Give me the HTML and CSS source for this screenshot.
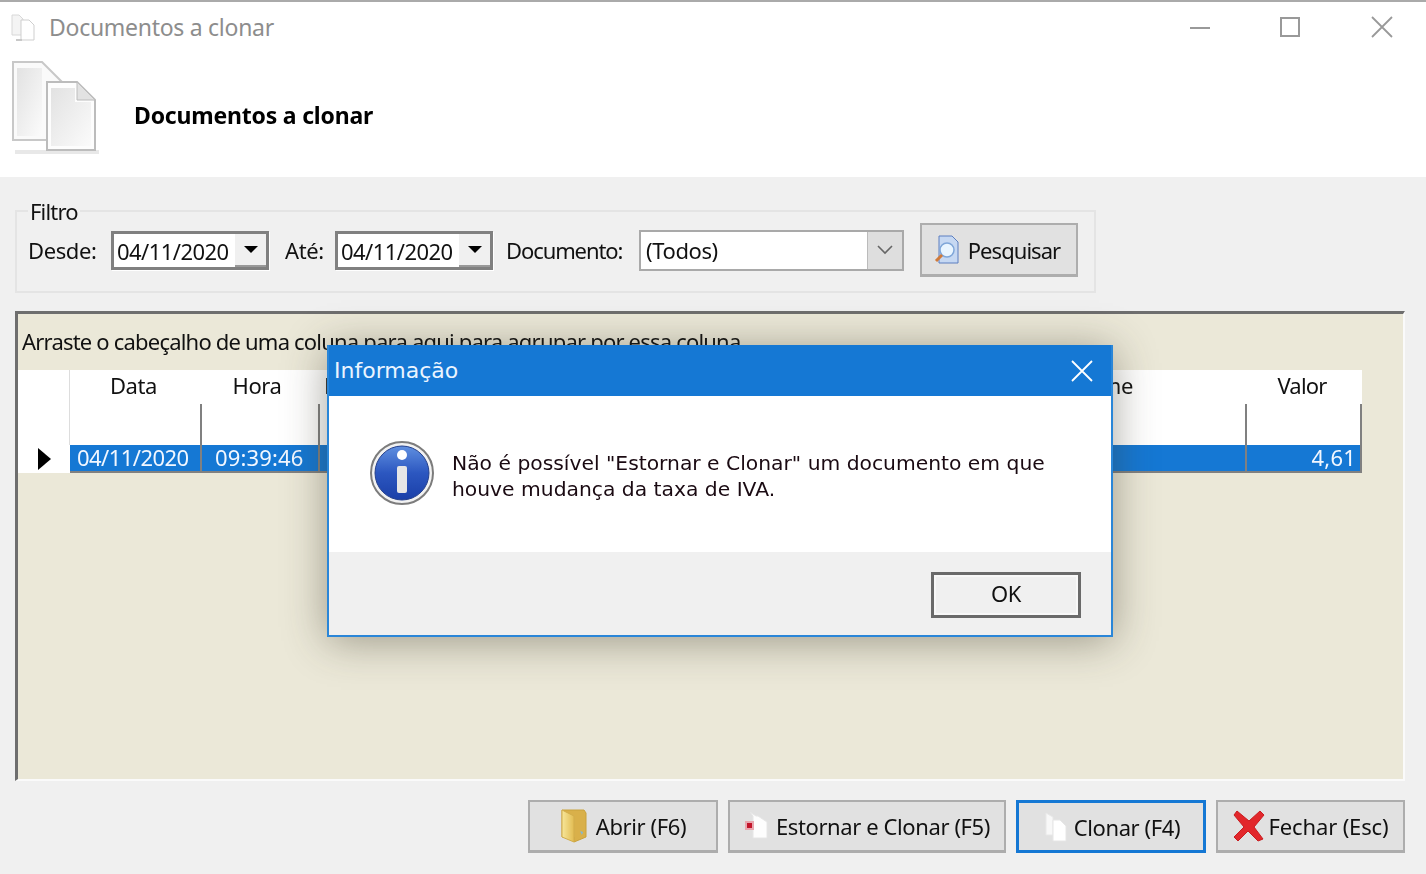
FILE: index.html
```html
<!DOCTYPE html>
<html lang="pt">
<head>
<meta charset="utf-8">
<title>Documentos a clonar</title>
<link rel="stylesheet" href="styles.css">
</head>
<body>
<div class="window">
  <header class="head">
    <div class="titlebar">
      <svg class="title-icon" width="26" height="28" viewBox="0 0 26 28"><path d="M2 2h7l4 4v16H2z" fill="#f4f4f4" stroke="#d8d8d8"/><path d="M11 7h8l5 5v15H11z" fill="#fff" stroke="#cfcfcf"/><path d="M6 27h6" stroke="#c8c8c8" stroke-width="2"/></svg>
      <span class="title-text">Documentos a clonar</span>
      <div class="win-controls">
        <svg width="22" height="22" viewBox="0 0 22 22"><path d="M1 12h20" stroke="#999" stroke-width="2"/></svg>
        <svg width="22" height="22" viewBox="0 0 22 22"><rect x="2" y="2" width="18" height="18" fill="none" stroke="#999" stroke-width="2"/></svg>
        <svg class="win-close" width="22" height="22" viewBox="0 0 22 22"><path d="M1 1l20 20M21 1L1 21" stroke="#999" stroke-width="1.8"/></svg>
      </div>
    </div>
    <div class="banner">
      <svg class="banner-icon" width="90" height="96" viewBox="0 0 90 96">
        <defs>
          <linearGradient id="pg" x1="0" y1="0" x2="1" y2="1"><stop offset="0" stop-color="#e2e2e2"/><stop offset="1" stop-color="#fbfbfb"/></linearGradient>
        </defs>
        <path d="M4 92h84" stroke="#e8e8e8" stroke-width="4"/>
        <path d="M2 2h29l20 20v58H2z" fill="#fafafa" stroke="#c8c8c8" stroke-width="2"/>
        <path d="M6 8h25v68H6z" fill="url(#pg)"/>
        <path d="M36 22h30l18 18v50H36z" fill="#fdfdfd" stroke="#bcbcbc" stroke-width="2"/>
        <path d="M66 22v18h18z" fill="#e2e2e2" stroke="#bcbcbc"/>
        <path d="M40 28h24v14h16v44H40z" fill="url(#pg)"/>
      </svg>
      <strong class="banner-text">Documentos a clonar</strong>
    </div>
  </header>

  <main class="content">
    <fieldset class="filter">
      <legend class="filter-legend">Filtro</legend>
      <div class="filter-row">
        <span class="lbl lbl-desde">Desde:</span>
        <div class="date"><span class="date-val">04/11/2020</span><span class="date-btn"><i class="tri"></i></span></div>
        <span class="lbl lbl-ate">Até:</span>
        <div class="date"><span class="date-val">04/11/2020</span><span class="date-btn"><i class="tri"></i></span></div>
        <span class="lbl lbl-doc">Documento:</span>
        <div class="combo"><span class="combo-val">(Todos)</span><span class="combo-btn"><svg width="16" height="10" viewBox="0 0 16 10"><path d="M1 1l7 7 7-7" fill="none" stroke="#666" stroke-width="1.6"/></svg></span></div>
        <button class="btn btn-search">
          <svg width="26" height="30" viewBox="0 0 26 30"><path d="M5 1h13l6 6v21H5z" fill="#c6d8f2" stroke="#5c7fc0"/><circle cx="13" cy="15" r="7" fill="#e9f5ff" stroke="#7fa6d8" stroke-width="1.5"/><path d="M8 20l-6 6" stroke="#d07a3a" stroke-width="3"/></svg>
          <span>Pesquisar</span>
        </button>
      </div>
    </fieldset>

    <section class="panel">
      <div class="group-hint">Arraste o cabeçalho de uma coluna para aqui para agrupar por essa coluna</div>
      <div class="table">
        <div class="th th-ind"></div>
        <div class="th">Data</div>
        <div class="th th-hora">Hora</div>
        <div class="th th-left">Documento</div>
        <div class="th th-name">Nome</div>
        <div class="th th-valor">Valor</div>

        <div class="sp sp-ind"></div>
        <div class="sp"></div>
        <div class="sp"></div>
        <div class="sp sp-none"></div>
        <div class="sp"></div>
        <div class="sp"></div>

        <div class="td-ind"><i class="arrow"></i></div>
        <div class="td">04/11/2020</div>
        <div class="td td-time">09:39:46</div>
        <div class="td td-none"></div>
        <div class="td"></div>
        <div class="td td-num">4,61</div>
      </div>
    </section>

    <footer class="actions">
      <button class="btn btn-a">
        <svg width="28" height="34" viewBox="0 0 28 34"><defs><linearGradient id="fd" x1="0" y1="0" x2="1" y2="0"><stop offset="0" stop-color="#f7e69a"/><stop offset="1" stop-color="#e2bc52"/></linearGradient></defs><path d="M2 1h22l2 3v24l-12 5V28H2z" fill="#d9b04a" stroke="#c9a23c"/><path d="M2 1l12 6v26L2 28z" fill="url(#fd)" stroke="#d2ad4c"/><path d="M20 22l3 1-1 3z" fill="#7fb8d8"/></svg>
        <span>Abrir (F6)</span>
      </button>
      <button class="btn btn-b">
        <svg width="26" height="32" viewBox="0 0 26 32"><path d="M6 2l6 4h2l9 6v16H9V6z" fill="#fdfdfd" stroke="#e6e6e6"/><rect x="1" y="11" width="9" height="9" fill="#e8a6ae"/><rect x="3" y="13" width="5" height="5" fill="#c2142a"/></svg>
        <span>Estornar e Clonar (F5)</span>
      </button>
      <button class="btn btn-c">
        <svg width="26" height="32" viewBox="0 0 26 32"><path d="M4 2l7 4v18H4z" fill="#f8f8f8" stroke="#e8e8e8"/><path d="M11 9h7l6 6v15H11z" fill="#fff" stroke="#e6e6e6"/></svg>
        <span>Clonar (F4)</span>
      </button>
      <button class="btn btn-d">
        <svg width="32" height="32" viewBox="0 0 32 32"><path d="M4 1l12 10L27 1l4 4-10 12 9 12-5 2-10-10L5 31l-4-4 10-10L1 5z" fill="#e2272b" stroke="#c91c20"/></svg>
        <span>Fechar (Esc)</span>
      </button>
    </footer>
  </main>
</div>

<div class="dialog" role="dialog">
  <div class="dlg-title">
    <span>Informação</span>
    <svg width="22" height="22" viewBox="0 0 22 22"><path d="M1 1l20 20M21 1L1 21" stroke="#fff" stroke-width="1.8"/></svg>
  </div>
  <div class="dlg-body">
    <svg class="dlg-icon" width="66" height="66" viewBox="0 0 66 66">
      <defs>
        <linearGradient id="ib" x1="0" y1="0" x2="0" y2="1"><stop offset="0" stop-color="#5f8fe0"/><stop offset=".5" stop-color="#2c57c0"/><stop offset="1" stop-color="#1a3fa8"/></linearGradient>
      </defs>
      <circle cx="33" cy="33" r="31" fill="#f2f2f2" stroke="#7c7c7c" stroke-width="2"/>
      <circle cx="33" cy="33" r="27" fill="url(#ib)" stroke="#24408c"/>
      <circle cx="33" cy="15" r="5" fill="#fff"/>
      <rect x="28" y="26" width="10" height="27" rx="2" fill="#e6e6e6"/>
    </svg>
    <p class="dlg-msg">Não é possível "Estornar e Clonar" um documento em que<br>houve mudança da taxa de IVA.</p>
  </div>
  <div class="dlg-foot"><button class="ok">OK</button></div>
</div>
</body>
</html>
```
FILE: styles.css
```css
* { box-sizing: border-box; }
html, body { margin: 0; height: 874px; overflow: hidden; }
body {
  background: #f0f0f0;
  font-family: "Noto Sans", "Open Sans", sans-serif;
  font-size: 22px;
  color: #111;
  position: relative;
}
.window { display: flex; flex-direction: column; height: 874px; filter: blur(0.45px); }

.head { background: #fff; border-top: 2px solid #aaa; height: 177px; }
.titlebar { display: flex; align-items: center; height: 52px; padding: 0 33px 2px 10px; }
.title-icon { margin-right: 13px; }
.title-text { font-size: 23px; color: #8d8d8d; letter-spacing: -0.28px; }
.win-controls { margin-left: auto; display: flex; gap: 68px; }
.win-close { margin-left: 2px; }
.banner { display: flex; align-items: flex-start; height: 100px; padding-left: 11px; }
.banner-icon { margin-top: 6px; }
.banner-text { margin: 45px 0 0 33px; font-size: 23px; color: #000; letter-spacing: -0.2px; line-height: 32px; }

.content { flex: 1; display: flex; flex-direction: column; padding: 0 21px 0 15px; }

.filter { margin: 22px 0 0; padding: 0 0 0 11px; width: 1081px; height: 94px; border: 2px solid #e4e4e4; }
.filter-legend { margin-left: 0; padding: 0 2px; font-size: 22px; line-height: 24px; letter-spacing: -0.8px; }
.filter-row { display: flex; align-items: center; height: 56px; margin-top: -1px; }
.lbl { letter-spacing: -0.4px; white-space: nowrap; }
.lbl-desde { width: 83px; }
.lbl-ate { width: 50px; margin-left: 16px; }
.lbl-doc { width: 133px; margin-left: 13px; letter-spacing: -1.1px; }

.date {
  width: 158px; height: 39px; display: flex; align-items: stretch; background: #fff;
  border: 3px solid #808080; box-shadow: 1px 1px 0 #fff;
}
.date-val { flex: 1; padding-left: 3px; line-height: 34px; letter-spacing: -0.55px; }
.date-btn { width: 31px; background: #f0f0f0; display: flex; align-items: center; justify-content: center; border-bottom: 2px solid #999; }
.tri { width: 0; height: 0; border-left: 7px solid transparent; border-right: 7px solid transparent; border-top: 7px solid #000; }

.combo { width: 265px; height: 41px; display: flex; border: 2px solid #a9a9a9; background: #fff; }
.combo-val { flex: 1; padding-left: 5px; line-height: 37px; letter-spacing: -0.4px; }
.combo-btn { width: 35px; background: #dedede; border-left: 1px solid #bbb; display: flex; align-items: center; justify-content: center; }

.btn {
  display: flex; align-items: center; justify-content: center; gap: 6px;
  height: 53px; padding: 0; background: #e1e1e1; border: 2px solid #adadad; border-bottom-width: 3px;
  font: inherit; color: #111; letter-spacing: -0.4px; white-space: nowrap;
}
.btn-search { width: 158px; height: 54px; margin-left: 16px; gap: 8px; letter-spacing: -0.95px; padding-right: 4px; }

.panel {
  flex: 0 0 470px; margin-top: 18px; background: #ebe8d8;
  border-top: 3px solid #6e6e6e; border-left: 3px solid #6e6e6e;
  border-right: 2px solid #fafafa; border-bottom: 2px solid #fafafa;
}
.group-hint { height: 56px; line-height: 54px; padding-left: 4px; letter-spacing: -0.8px; white-space: nowrap; overflow: hidden; }
.table {
  width: 1344px;
  display: grid;
  grid-template-columns: 52px 132px 118px 381px 546px 115px;
  grid-template-rows: 34px 41px 28px;
}
.th { background: #fff; text-align: center; line-height: 30px; letter-spacing: -0.4px; padding-right: 5px; }
.th-hora { padding-right: 8px; }
.th-valor { padding-right: 5px; letter-spacing: -0.8px; }
.th-left { text-align: left; padding-left: 4px; }
.th-name { text-align: right; padding-right: 114px; }
.sp { background: #fff; border-right: 2px solid #808080; }
.sp-ind, .sp-none { border-right: 0; }
.th-ind, .sp-ind { box-shadow: inset -1px 0 0 #ddd; }
.td-ind { background: #fff; display: flex; align-items: center; justify-content: center; padding-left: 1px; }
.arrow { width: 0; height: 0; border-top: 11px solid transparent; border-bottom: 11px solid transparent; border-left: 13px solid #000; }
.td {
  background: #1578d4; color: #f2f7ff; border-right: 2px solid #808080; border-bottom: 2px solid #808080;
  line-height: 25px; padding-left: 7px; letter-spacing: -0.55px; white-space: nowrap;
}
.td-time { padding-left: 13px; letter-spacing: 0.15px; }
.td-none { border-right: 0; }
.td-num { text-align: right; padding-right: 4px; letter-spacing: 0.2px; }

.actions { display: flex; justify-content: flex-end; gap: 10px; margin-top: 19px; }
.btn-a { width: 190px; gap: 8px; }
.btn-b { width: 278px; }
.btn-c { width: 190px; border: 3px solid #1578d4; gap: 6px; }
.btn-d { width: 189px; gap: 4px; letter-spacing: -0.15px; }

.dialog {
  position: absolute; left: 327px; top: 345px; width: 786px; height: 292px;
  display: flex; flex-direction: column; background: #fff;
  border: 2px solid #2a86d8; border-top: 0;
  box-shadow: 0 4px 40px rgba(60, 55, 40, 0.45);
  filter: blur(0.45px);
}
.dlg-title {
  height: 51px; flex: none; background: #1578d4; color: #eaf4ff; display: flex; align-items: center;
  justify-content: space-between; padding: 0 18px 0 5px; font-family: "DejaVu Sans", sans-serif; font-size: 22px;
}
.dlg-body { flex: 1; display: flex; align-items: center; padding: 0 0 2px 40px; }
.dlg-icon { flex: none; }
.dlg-msg {
  margin: 5px 0 0 17px; font-family: "DejaVu Sans", sans-serif; font-size: 20.3px; line-height: 26px; color: #1a0a12;
}
.dlg-foot { height: 83px; flex: none; background: #f0f0f0; padding: 20px 30px 0 0; display: flex; justify-content: flex-end; align-items: flex-start; }
.ok {
  width: 150px; height: 46px; padding: 0 0 4px; background: #f0f0f0;
  border: 3px solid #6a6a6a; border-bottom-width: 4px; outline: 2px solid #f8f8f8; outline-offset: -5px;
  font: inherit; color: #111; letter-spacing: -0.3px;
}
```
